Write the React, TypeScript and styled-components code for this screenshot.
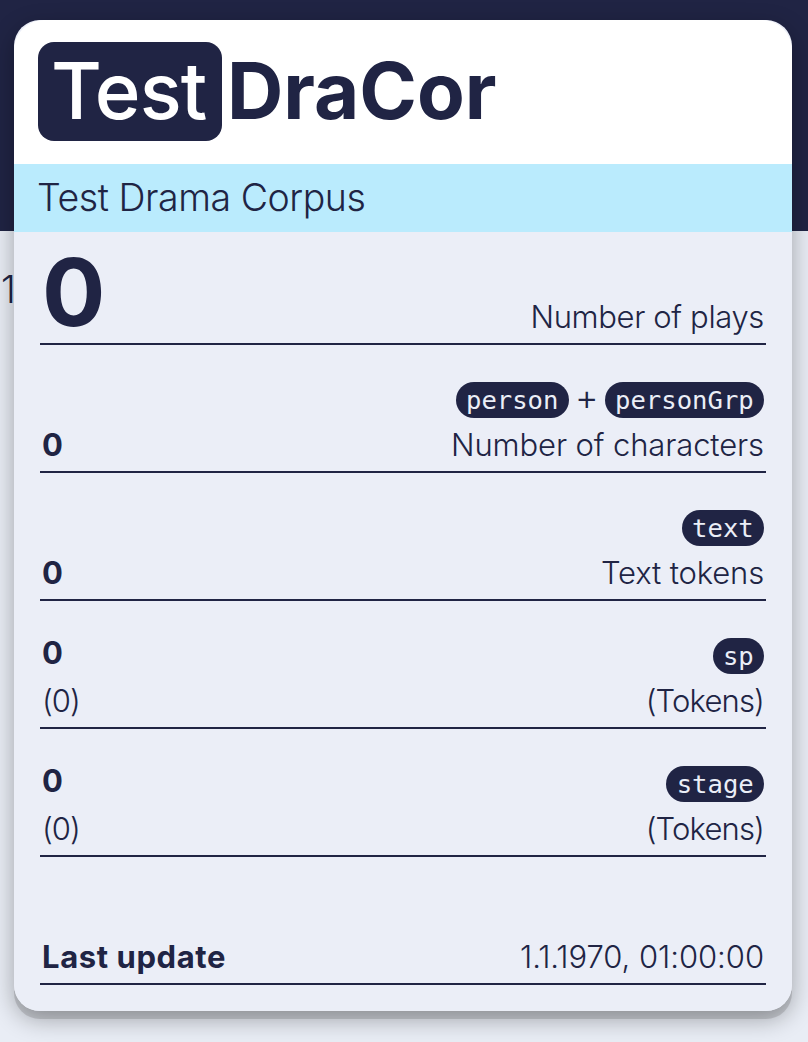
import React from "react";
import styled, { createGlobalStyle } from "styled-components";

const navy = "#202444";
const sans = 'Inter, "Open Sans", sans-serif';
const mono = '"DejaVu Sans Mono", monospace';

const GlobalStyle = createGlobalStyle`
  *, *::before, *::after { box-sizing: border-box; }
  html, body { margin: 0; padding: 0; }
  body {
    background: #e9edf5;
    color: ${navy};
    font-family: ${sans};
    font-size: 31px;
    font-weight: 320;
    line-height: 48px;
    overflow: hidden;
  }
`;

const Page = styled.div`
  position: relative;
  height: 1042px;
  overflow: hidden;
  padding: 20px 16px 0 14px;
  background: linear-gradient(${navy} 231px, transparent 231px);
`;

const Stray = styled.span`
  position: absolute;
  left: 1px;
  top: 266px;
  font-size: 37.5px;
`;

const Card = styled.section`
  position: relative;
  height: 991px;
  border-radius: 26px;
  overflow: hidden;
  background: #ebeef7;
`;

const Shadow = styled.div`
  position: relative;
  border-radius: 26px;
  box-shadow: 0 8px 0 rgba(0, 0, 0, 0.13), 0 8px 24px rgba(0, 0, 0, 0.32);
`;

const Header = styled.header`
  display: flex;
  align-items: flex-start;
  height: 144px;
  padding: 22px 24px;
  border-radius: 30px 30px 0 0;
  background: #fff;
`;

const Title = styled.h1`
  display: flex;
  margin: 0;
  font-size: 78px;
  font-weight: 700;
  line-height: 97px;
`;

const Prefix = styled.span`
  width: 184px;
  height: 99px;
  margin-right: 5px;
  padding-left: 13px;
  border-radius: 16px;
  background: ${navy};
  color: #fff;
  font-weight: 530;
  letter-spacing: -1px;
`;

const Subtitle = styled.h2`
  height: 68px;
  margin: 0;
  padding: 0 23px;
  background: #baebfd;
  font-size: 37.5px;
  font-weight: 320;
  line-height: 68px;
  letter-spacing: -0.45px;
`;

const Stats = styled.div`
  padding: 0 26px;
`;

const Row = styled.div<{ $height?: number }>`
  display: flex;
  align-items: flex-end;
  justify-content: space-between;
  height: ${(p) => p.$height ?? 128}px;
  padding: 0 2px 2px;
  border-bottom: 2px solid ${navy};
`;

const Cell = styled.div<{ $end?: boolean }>`
  display: flex;
  flex-direction: column;
  align-items: ${(p) => (p.$end ? "flex-end" : "flex-start")};
`;

const Line = styled.div<{ $spacing?: number }>`
  display: flex;
  align-items: center;
  height: 48px;
  white-space: pre;
  letter-spacing: ${(p) => p.$spacing ?? 0}px;
`;

const Strong = styled(Line)`
  font-weight: 650;
`;

const Total = styled.div`
  height: 84px;
  margin-bottom: 7px;
  font-size: 94px;
  font-weight: 650;
  line-height: 84px;
`;

const Tag = styled.code`
  height: 36px;
  margin-top: 6px;
  padding: 0 10.3px;
  border-radius: 18px;
  background: ${navy};
  color: #ebeef7;
  font-family: ${mono};
  font-size: 25.6px;
  font-weight: 400;
  line-height: 36px;
  letter-spacing: 0;
`;

const Plus = styled.span`
  width: 36px;
  font-size: 36px;
  text-align: center;
`;

export default function App() {
  return (
    <Page>
      <GlobalStyle />
      <Stray>1</Stray>
      <Shadow>
        <Card>
          <Header>
            <Title>
              <Prefix>Test</Prefix>
              <span>DraCor</span>
            </Title>
          </Header>
          <Subtitle>Test Drama Corpus</Subtitle>
          <Stats>
            <Row $height={113}>
              <Total>0</Total>
              <Line $spacing={-0.35}>Number of plays</Line>
            </Row>
            <Row>
              <Strong>0</Strong>
              <Cell $end>
                <Line>
                  <Tag>person</Tag>
                  <Plus>+</Plus>
                  <Tag>personGrp</Tag>
                </Line>
                <Line $spacing={-0.12}>Number of characters</Line>
              </Cell>
            </Row>
            <Row>
              <Strong>0</Strong>
              <Cell $end>
                <Line>
                  <Tag>text</Tag>
                </Line>
                <Line $spacing={-0.15}>Text tokens</Line>
              </Cell>
            </Row>
            {["sp", "stage"].map((name) => (
              <Row key={name}>
                <Cell>
                  <Strong>0</Strong>
                  <Line $spacing={-1}>(0)</Line>
                </Cell>
                <Cell $end>
                  <Line>
                    <Tag>{name}</Tag>
                  </Line>
                  <Line $spacing={-0.85}>(Tokens)</Line>
                </Cell>
              </Row>
            ))}
            <Row>
              <Strong $spacing={0.6}>Last update</Strong>
              <Line $spacing={-0.05}>1.1.1970, 01:00:00</Line>
            </Row>
          </Stats>
        </Card>
      </Shadow>
    </Page>
  );
}
